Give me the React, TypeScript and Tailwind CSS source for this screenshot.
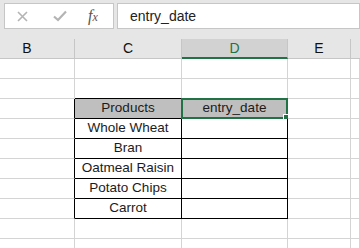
import React from "react";

const cols = [
  { key: "B", w: "w-[75px]", label: "B", pad: "pr-[20px]" },
  { key: "C", w: "w-[107px]", label: "C", pad: "" },
  { key: "D", w: "w-[106px]", label: "D", pad: "" },
  { key: "E", w: "w-[63px]", label: "E", pad: "" },
  { key: "F", w: "flex-1", label: "", pad: "" },
];

const products = ["Whole Wheat", "Bran", "Oatmeal Raisin", "Potato Chips", "Carrot"];

// grid rows shown below the column header (row 2 is the table header)
const rowText: Record<number, string[]> = {
  2: ["Products", "entry_date"],
};
products.forEach((p, i) => {
  rowText[i + 3] = [p, ""];
});

const inTable = (r: number, c: number) => r >= 2 && r <= 7 && (c === 1 || c === 2);

function Cell({ r, c }: { r: number; c: number }) {
  const col = cols[c];
  const rightBlack = inTable(r, c) || inTable(r, c + 1);
  const bottomBlack = inTable(r, c) || inTable(r + 1, c);
  const isHead = r === 2 && inTable(r, c);
  const text = rowText[r] && inTable(r, c) ? rowText[r][c - 1] : "";
  const selected = r === 2 && c === 2;

  return (
    <div
      className={`relative h-[20px] shrink-0 ${col.w} border-r border-b ${
        rightBlack ? "border-r-black" : "border-r-[#d4d4d4]"
      } ${bottomBlack ? "border-b-black" : "border-b-[#d4d4d4]"} ${
        isHead ? "bg-[#bfbfbf]" : "bg-white"
      } flex items-center justify-center text-[13.5px] text-[#1b1b1b]`}
    >
      {text}
      {selected && (
        <>
          <div className="pointer-events-none absolute -left-[1px] -top-[1px] -right-[1px] -bottom-[1px] border-2 border-[#217346]" />
          <div className="absolute -right-[3px] -bottom-[3px] h-[6px] w-[6px] bg-[#217346] outline outline-1 outline-white" />
        </>
      )}
    </div>
  );
}

export default function App() {
  return (
    <div
      className="h-[248px] w-[360px] overflow-hidden bg-white"
      style={{ fontFamily: '"Liberation Sans", Arial, sans-serif' }}
    >
      {/* formula bar */}
      <div className="h-[39px] bg-[#e6e6e6] pt-[3px]">
        <div className="flex h-[26px] gap-[3px] pl-[4px]">
          <div className="flex w-[110px] items-center border border-[#c6c6c6] bg-white">
            <svg className="ml-[12px]" width="11" height="11" viewBox="0 0 11 11">
              <path d="M1 1 L10 10 M10 1 L1 10" stroke="#b4b4b4" strokeWidth="1.6" fill="none" />
            </svg>
            <svg className="ml-[25px]" width="14" height="12" viewBox="0 0 14 12">
              <path d="M1 6.5 L5 10 L13 1.5" stroke="#b4b4b4" strokeWidth="2.2" fill="none" />
            </svg>
            <span
              className="ml-[21px] text-[16px] italic leading-none text-[#555]"
              style={{ fontFamily: '"Liberation Serif", "Times New Roman", serif' }}
            >
              f<span className="text-[12px]">x</span>
            </span>
          </div>
          <div className="flex flex-1 items-center border border-[#c6c6c6] bg-white pl-[12px] text-[14px] text-[#222]">
            entry_date
          </div>
        </div>
      </div>

      {/* column headers */}
      <div className="flex h-[20px] bg-[#e6e6e6]">
        {cols.map((col) => (
          <div
            key={col.key}
            className={`flex shrink-0 items-center justify-center ${col.w} ${col.pad} ${
              col.key === "F" ? "" : "border-r border-r-[#c6c6c6]"
            } ${
              col.key === "D"
                ? "border-b-2 border-b-[#217346] bg-[#d2d2d2] text-[#217346]"
                : "border-b border-b-[#c6c6c6] text-[#111]"
            } text-[14px]`}
          >
            {col.label}
          </div>
        ))}
      </div>

      {/* sheet rows */}
      {Array.from({ length: 10 }).map((_, r) => (
        <div key={r} className="flex">
          {cols.map((col, c) => (
            <Cell key={col.key} r={r} c={c} />
          ))}
        </div>
      ))}
    </div>
  );
}
